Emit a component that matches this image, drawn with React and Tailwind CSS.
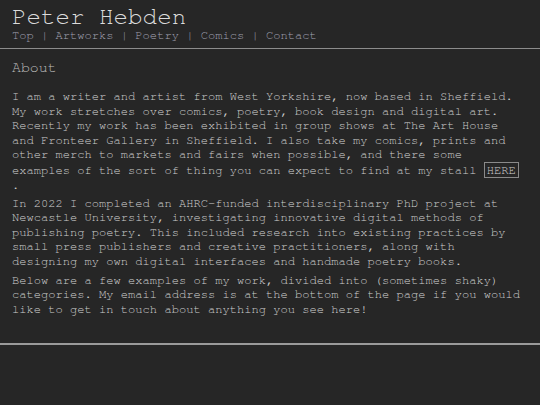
export default function App() {
  return (
    <div className="min-h-[405px] bg-[#262626] text-[#cfcfcf] font-['FreeMono','Liberation_Mono',monospace]">
      <header className="px-3 pt-[5px] pb-[6px]">
        <h1 className="text-[24.2px] leading-[24px] text-[#dcdcdc]">Peter Hebden</h1>
        <nav className="text-[12.1px] leading-[14px] text-[#a3a3b4] mt-[-1px]">
          Top | Artworks | Poetry | Comics | Contact
        </nav>
      </header>
      <hr className="border-0 h-px bg-[#8c8c8c]" />
      <main className="px-3 pt-[10px]">
        <h2 className="text-[14.9px] leading-[18px] text-[#bfbfbf]">About</h2>
        <div className="mt-[12px] w-[513px] text-[12.1px] leading-[14.6px]">
          <p>
            I am a writer and artist from West Yorkshire, now based in Sheffield. My work stretches over comics, poetry, book design and digital art. Recently my work has been exhibited in group shows at The Art House and Fronteer Gallery in Sheffield. I also take my comics, prints and other merch to markets and fairs when possible, and there some examples of the sort of thing you can expect to find at my stall{" "}
            <span className="inline-block border border-[#8a8a8a] px-[2px] py-px leading-[12px]">HERE</span>
            <br />.
          </p>
          <p className="mt-[3px]">
            In 2022 I completed an AHRC-funded interdisciplinary PhD project at Newcastle University, investigating innovative digital methods of publishing poetry. This included research into existing practices by small press publishers and creative practitioners, along with designing my own digital interfaces and handmade poetry books.
          </p>
          <p className="mt-[4px]">
            Below are a few examples of my work, divided into (sometimes shaky) categories. My email address is at the bottom of the page if you would like to get in touch about anything you see here!
          </p>
        </div>
      </main>
      <div className="h-[27px]" />
      <hr className="border-0 h-[2px] bg-[#9a9a9a]" />
    </div>
  );
}
